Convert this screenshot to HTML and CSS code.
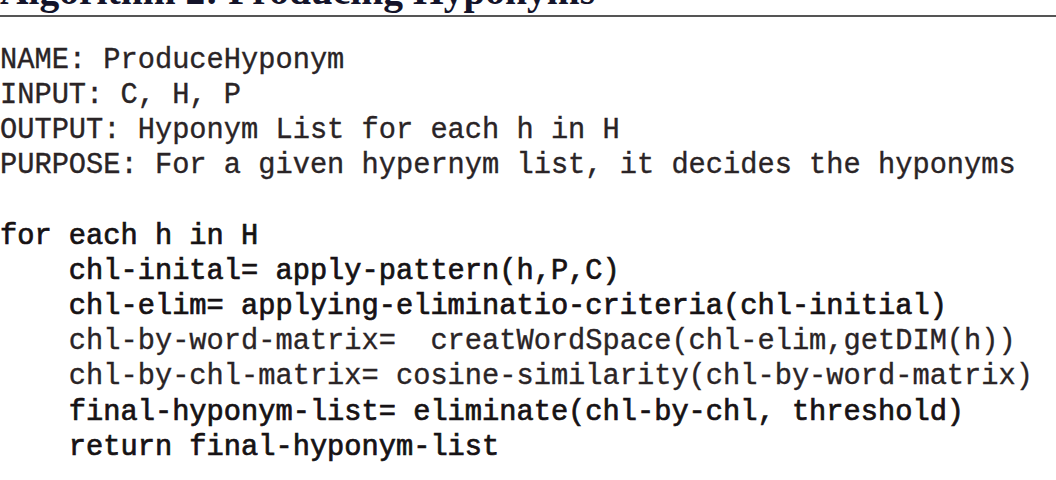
FILE: index.html
```html
<!DOCTYPE html>
<html>
<head>
<meta charset="utf-8">
<link rel="stylesheet" href="styles.css">
</head>
<body>
<div class="algo">
  <div class="title">Algorithm 2: Producing Hyponyms</div>
  <div class="listing">
<div class="line">NAME: ProduceHyponym</div>
<div class="line">INPUT: C, H, P</div>
<div class="line">OUTPUT: Hyponym List for each h in H</div>
<div class="line">PURPOSE: For a given hypernym list, it decides the hyponyms</div>
<div class="line"> </div>
<div class="line heavy">for each h in H</div>
<div class="line heavy">    chl-inital= apply-pattern(h,P,C)</div>
<div class="line heavy">    chl-elim= applying-eliminatio-criteria(chl-initial)</div>
<div class="line">    chl-by-word-matrix=  creatWordSpace(chl-elim,getDIM(h))</div>
<div class="line">    chl-by-chl-matrix= cosine-similarity(chl-by-word-matrix)</div>
<div class="line heavy">    final-hyponym-list= eliminate(chl-by-chl, threshold)</div>
<div class="line heavy">    return final-hyponym-list</div>
  </div>
</div>
</body>
</html>
```
FILE: styles.css
```css
html, body {
  margin: 0;
  padding: 0;
  background: #ffffff;
}
body {
  width: 1056px;
  height: 480px;
  overflow: hidden;
}
.algo {
  display: flex;
  flex-direction: column;
}
.title {
  font-family: "Liberation Serif", serif;
  font-weight: bold;
  font-size: 39.5px;
  line-height: 39.5px;
  color: #14142a;
  margin-top: -28px;
  padding-bottom: 3.5px;
  border-bottom: 2px solid #555555;
  white-space: nowrap;
}
.listing {
  margin-top: 25.75px;
  font-family: "Liberation Mono", monospace;
  font-size: 28.7px;
  line-height: 35.2px;
  color: #2a2426;
  -webkit-text-stroke: 0.35px #2a2426;
}
.line {
  white-space: pre;
  height: 35.2px;
}
.heavy {
  color: #161214;
  -webkit-text-stroke: 0.7px #161214;
}
```
